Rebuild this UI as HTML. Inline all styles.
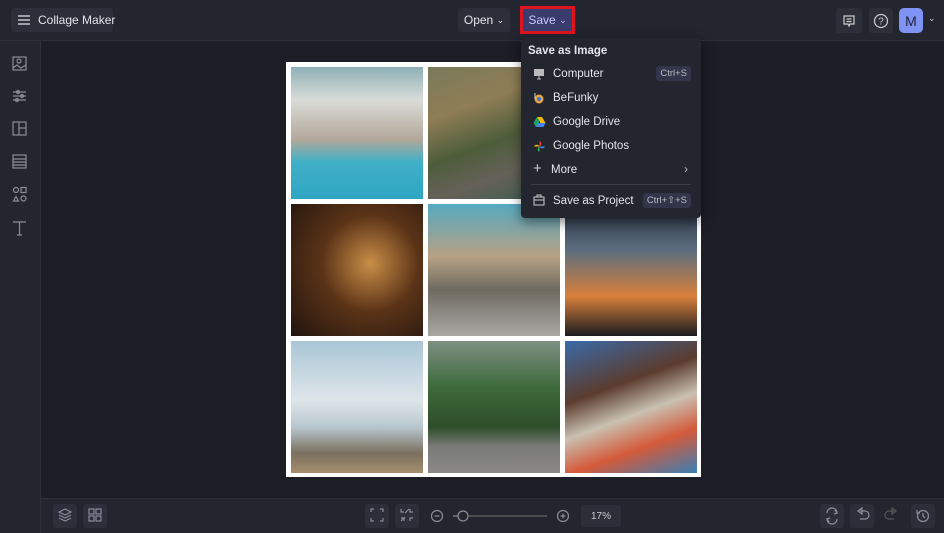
<!DOCTYPE html>
<html><head><meta charset="utf-8"><style>
*{margin:0;padding:0;box-sizing:border-box}
body{width:944px;height:533px;background:#1c1d25;font-family:"Liberation Sans",sans-serif;color:#e4e5ea;position:relative;overflow:hidden;white-space:nowrap}
.top{position:absolute;left:0;top:0;width:944px;height:41px;background:#23252f;border-bottom:1px solid #2d2f3a}
.side{position:absolute;left:0;top:41px;width:41px;height:492px;background:#23252f;border-right:1px solid #2d2f3a}
.bot{position:absolute;left:41px;top:498px;width:903px;height:35px;background:#23252f;border-top:1px solid #2d2f3a}
.btn{position:absolute;background:#2c2e3a;border-radius:3px;font-size:12px;display:flex;align-items:center;justify-content:center}
.ic{position:absolute;stroke:#8a8d99;fill:none;stroke-width:1.2}
.collage{position:absolute;left:286px;top:62px;width:415px;height:415px;background:#fff}
.c{position:absolute;width:132px;height:132px}
.menu{position:absolute;left:521px;top:38px;width:180px;height:180px;background:#23252f;border-radius:4px;box-shadow:0 4px 12px rgba(0,0,0,.5);font-size:11.5px}
.mi{position:absolute;left:32px}
.kbd{position:absolute;right:10px;background:#33354a;border-radius:3px;font-size:9.5px;padding:2px 4px;color:#b9bbc6}
.tb{position:absolute;width:24px;height:24px;background:#2c2e3a;border-radius:3px}
</style></head><body>
<div class="top"></div>
<div class="side"></div>
<div class="bot"></div>

<div class="btn" style="left:11px;top:8px;width:102px;height:24px;justify-content:flex-start;padding-left:6px">
<svg width="14" height="12" style="margin-right:7px;flex:none"><path d="M1 2H13M1 6H13M1 10H13" stroke="#e4e5ea" stroke-width="1.3"/></svg>Collage Maker</div>
<div class="btn" style="left:458px;top:8px;width:52px;height:24px">Open&nbsp;<span style="font-size:9px">⌄</span></div>
<div class="btn" style="left:520px;top:6px;width:55px;height:28px;border:3px solid #e0141e;background:#3b3c6e;color:#c8c9f5;border-radius:0">Save&nbsp;<span style="font-size:9px">⌄</span></div>

<div class="btn" style="left:836px;top:8px;width:26px;height:25px"><svg width="14" height="14"><path d="M2 2H12V10H8L7 12L6 10H2Z M4.5 5H9.5M4.5 7.5H9.5" stroke="#ccc" fill="none" stroke-width="1.2"/></svg></div>
<div class="btn" style="left:869px;top:8px;width:24px;height:25px"><svg width="16" height="16"><circle cx="8" cy="8" r="6.5" stroke="#ccc" fill="none" stroke-width="1.2"/><text x="8" y="11.5" font-size="10" fill="#ccc" text-anchor="middle" font-family="Liberation Sans">?</text></svg></div>
<div class="btn" style="left:899px;top:8px;width:24px;height:25px;background:#7f93f5;color:#1e2030;font-size:14px;border-radius:5px">M</div>
<div style="position:absolute;left:928px;top:13px;font-size:9px;color:#ccc">⌄</div>

<svg class="ic" style="left:12px;top:56px" width="16" height="180">
<rect x="1" y="1" width="13" height="13"/><circle cx="7" cy="5" r="2"/><path d="M1 12L5 9L9 12L14 9"/>
<path d="M1 36H14M1 40H14M1 44H14"/><circle cx="6" cy="36" r="1.5"/><circle cx="10" cy="40" r="1.5"/><circle cx="5" cy="44" r="1.5"/>
<rect x="1" y="66" width="13" height="13"/><path d="M7 66V79M7 72H14"/>
<rect x="1" y="99" width="13" height="13"/><path d="M1 103H14M1 106H14M1 109H14"/>
<circle cx="4" cy="134" r="2.5"/><rect x="9" y="131.5" width="5" height="5"/><path d="M1.5 145L4 140.5L6.5 145Z"/><circle cx="11.5" cy="142.5" r="2.5"/>
<path d="M1 166H14M7.5 166V179M5 179H10"/>
</svg>

<div class="collage">
<div class="c" style="left:5px;top:5px;background:linear-gradient(180deg,#8fb0b8 0%,#d9dcd7 25%,#b3a89a 55%,#3fb0c8 72%,#2fa6c3 100%)"></div>
<div class="c" style="left:142px;top:5px;background:linear-gradient(160deg,#7a7a5a 0%,#8f7d55 30%,#4d5d3a 55%,#656158 75%,#3b5d4f 100%)"></div>
<div class="c" style="left:279px;top:5px;background:#5a6b7a"></div>
<div class="c" style="left:5px;top:142px;background:radial-gradient(circle at 60% 45%,#c98f48 0%,#5b3317 45%,#20140e 100%)"></div>
<div class="c" style="left:142px;top:142px;background:linear-gradient(180deg,#56a9c0 0%,#b7a184 40%,#6e6a60 65%,#a8a7a3 100%)"></div>
<div class="c" style="left:279px;top:142px;background:linear-gradient(180deg,#26313f 0%,#5c6e80 35%,#d9803b 70%,#1a1b20 100%)"></div>
<div class="c" style="left:5px;top:279px;background:linear-gradient(180deg,#a9c6d6 0%,#dfe6ea 45%,#b8c7cf 65%,#7a6f5e 85%,#a68f6c 100%)"></div>
<div class="c" style="left:142px;top:279px;background:linear-gradient(180deg,#7d8f83 0%,#3d6a3b 35%,#2e4e2a 65%,#7a7a78 80%,#8a8985 100%)"></div>
<div class="c" style="left:279px;top:279px;background:linear-gradient(160deg,#3a6aa8 0%,#5b3c2e 35%,#c9c1b2 55%,#d45a3a 75%,#3b7fb5 100%)"></div>
</div>

<div class="menu">
<div style="position:absolute;left:7px;top:7px;font-weight:bold;font-size:11.5px">Save as Image</div>
<svg style="position:absolute;left:12px;top:30px" width="12" height="12"><rect x="1" y="1" width="10" height="7" fill="#bbb"/><path d="M4 11H8M6 8V11" stroke="#bbb"/></svg>
<div class="mi" style="top:30px">Computer</div><div class="kbd" style="top:28px">Ctrl+S</div>
<svg style="position:absolute;left:12px;top:54px" width="12" height="12"><circle cx="6" cy="7" r="4.5" fill="#e8a33a"/><circle cx="6" cy="7" r="2" fill="#3a74d8"/><path d="M2 1V7" stroke="#ccc"/></svg>
<div class="mi" style="top:54px">BeFunky</div>
<svg style="position:absolute;left:12px;top:78px" width="13" height="12"><path d="M4 1H9L12.5 7H7.5Z" fill="#f6b900"/><path d="M4 1L0.5 7L3 11L6.5 5Z" fill="#1ea362"/><path d="M3 11H10.5L12.5 7H5Z" fill="#4285f4"/></svg>
<div class="mi" style="top:78px">Google Drive</div>
<svg style="position:absolute;left:12px;top:102px" width="13" height="13"><path d="M6.5 6.5V1A3 3 0 0 1 6.5 6.5" fill="#ea4335"/><path d="M6.5 6.5H12A3 3 0 0 1 6.5 6.5" fill="#4285f4"/><path d="M6.5 6.5V12A3 3 0 0 1 6.5 6.5" fill="#34a853"/><path d="M6.5 6.5H1A3 3 0 0 1 6.5 6.5" fill="#fbbc05"/></svg>
<div class="mi" style="top:102px">Google Photos</div>
<div style="position:absolute;left:12px;top:122px;font-size:15px;color:#ccc">+</div>
<div class="mi" style="top:126px;left:30px">More</div>
<div style="position:absolute;right:13px;top:124px;font-size:12px;color:#bbb">›</div>
<div style="position:absolute;left:10px;right:10px;top:146px;border-top:1px solid #3a3c48"></div>
<svg style="position:absolute;left:12px;top:156px" width="12" height="12"><rect x="1" y="3" width="10" height="8" stroke="#ccc" fill="none"/><path d="M4 3V1H8V3M1 6H11" stroke="#ccc" fill="none"/></svg>
<div class="mi" style="top:157px">Save as Project</div><div class="kbd" style="top:155px">Ctrl+⇧+S</div>
</div>

<div class="tb" style="left:53px;top:504px"></div><div class="tb" style="left:83px;top:504px"></div>
<div class="tb" style="left:365px;top:504px"></div><div class="tb" style="left:395px;top:504px"></div>
<div class="tb" style="left:820px;top:504px"></div><div class="tb" style="left:850px;top:504px"></div><div class="tb" style="left:880px;top:504px;background:none"></div><div class="tb" style="left:911px;top:504px"></div>
<svg class="ic" style="left:0;top:498px" width="944" height="35">
<path d="M65 11L71 14L65 17L59 14Z M59 17L65 20L71 17 M59 20L65 23L71 20"/>
<rect x="89" y="11" width="5" height="5"/><rect x="96" y="11" width="5" height="5"/><rect x="89" y="18" width="5" height="5"/><rect x="96" y="18" width="5" height="5"/>
<path d="M371 14V11H374M380 11H383V14M383 20V23H380M374 23H371V20"/>
<path d="M401 11V14H404M409 11L405 15M413 14H410V11M401 23L405 19M401 20H404V23M413 20H410V23"/>
<circle cx="437" cy="18" r="5.5"/><path d="M434.5 18H439.5"/>
<path d="M453 18H458"/><circle cx="463" cy="18" r="5"/><path d="M468 18H547" stroke="#666"/>
<circle cx="563" cy="18" r="5.5"/><path d="M560.5 18H565.5M563 15.5V20.5"/>
<path d="M827 15A5 5 0 0 1 837 15M837 21A5 5 0 0 1 827 21M835 12L837 15L834 16M829 24L827 21L830 20"/>
<path d="M858 13L862 10V16ZM860 13H865A4 4 0 0 1 865 21H860"/>
<path d="M896 13L892 10V16ZM894 13H889A4 4 0 0 0 889 21H894" stroke="#555"/>
<circle cx="923" cy="18" r="5.5"/><path d="M923 15V18L925 20M917 12V15H920"/>
</svg>
<div style="position:absolute;left:581px;top:505px;width:40px;height:22px;background:#2c2e3a;border-radius:3px;font-size:10px;display:flex;align-items:center;justify-content:center;color:#ccc">17%</div>
</body></html>
